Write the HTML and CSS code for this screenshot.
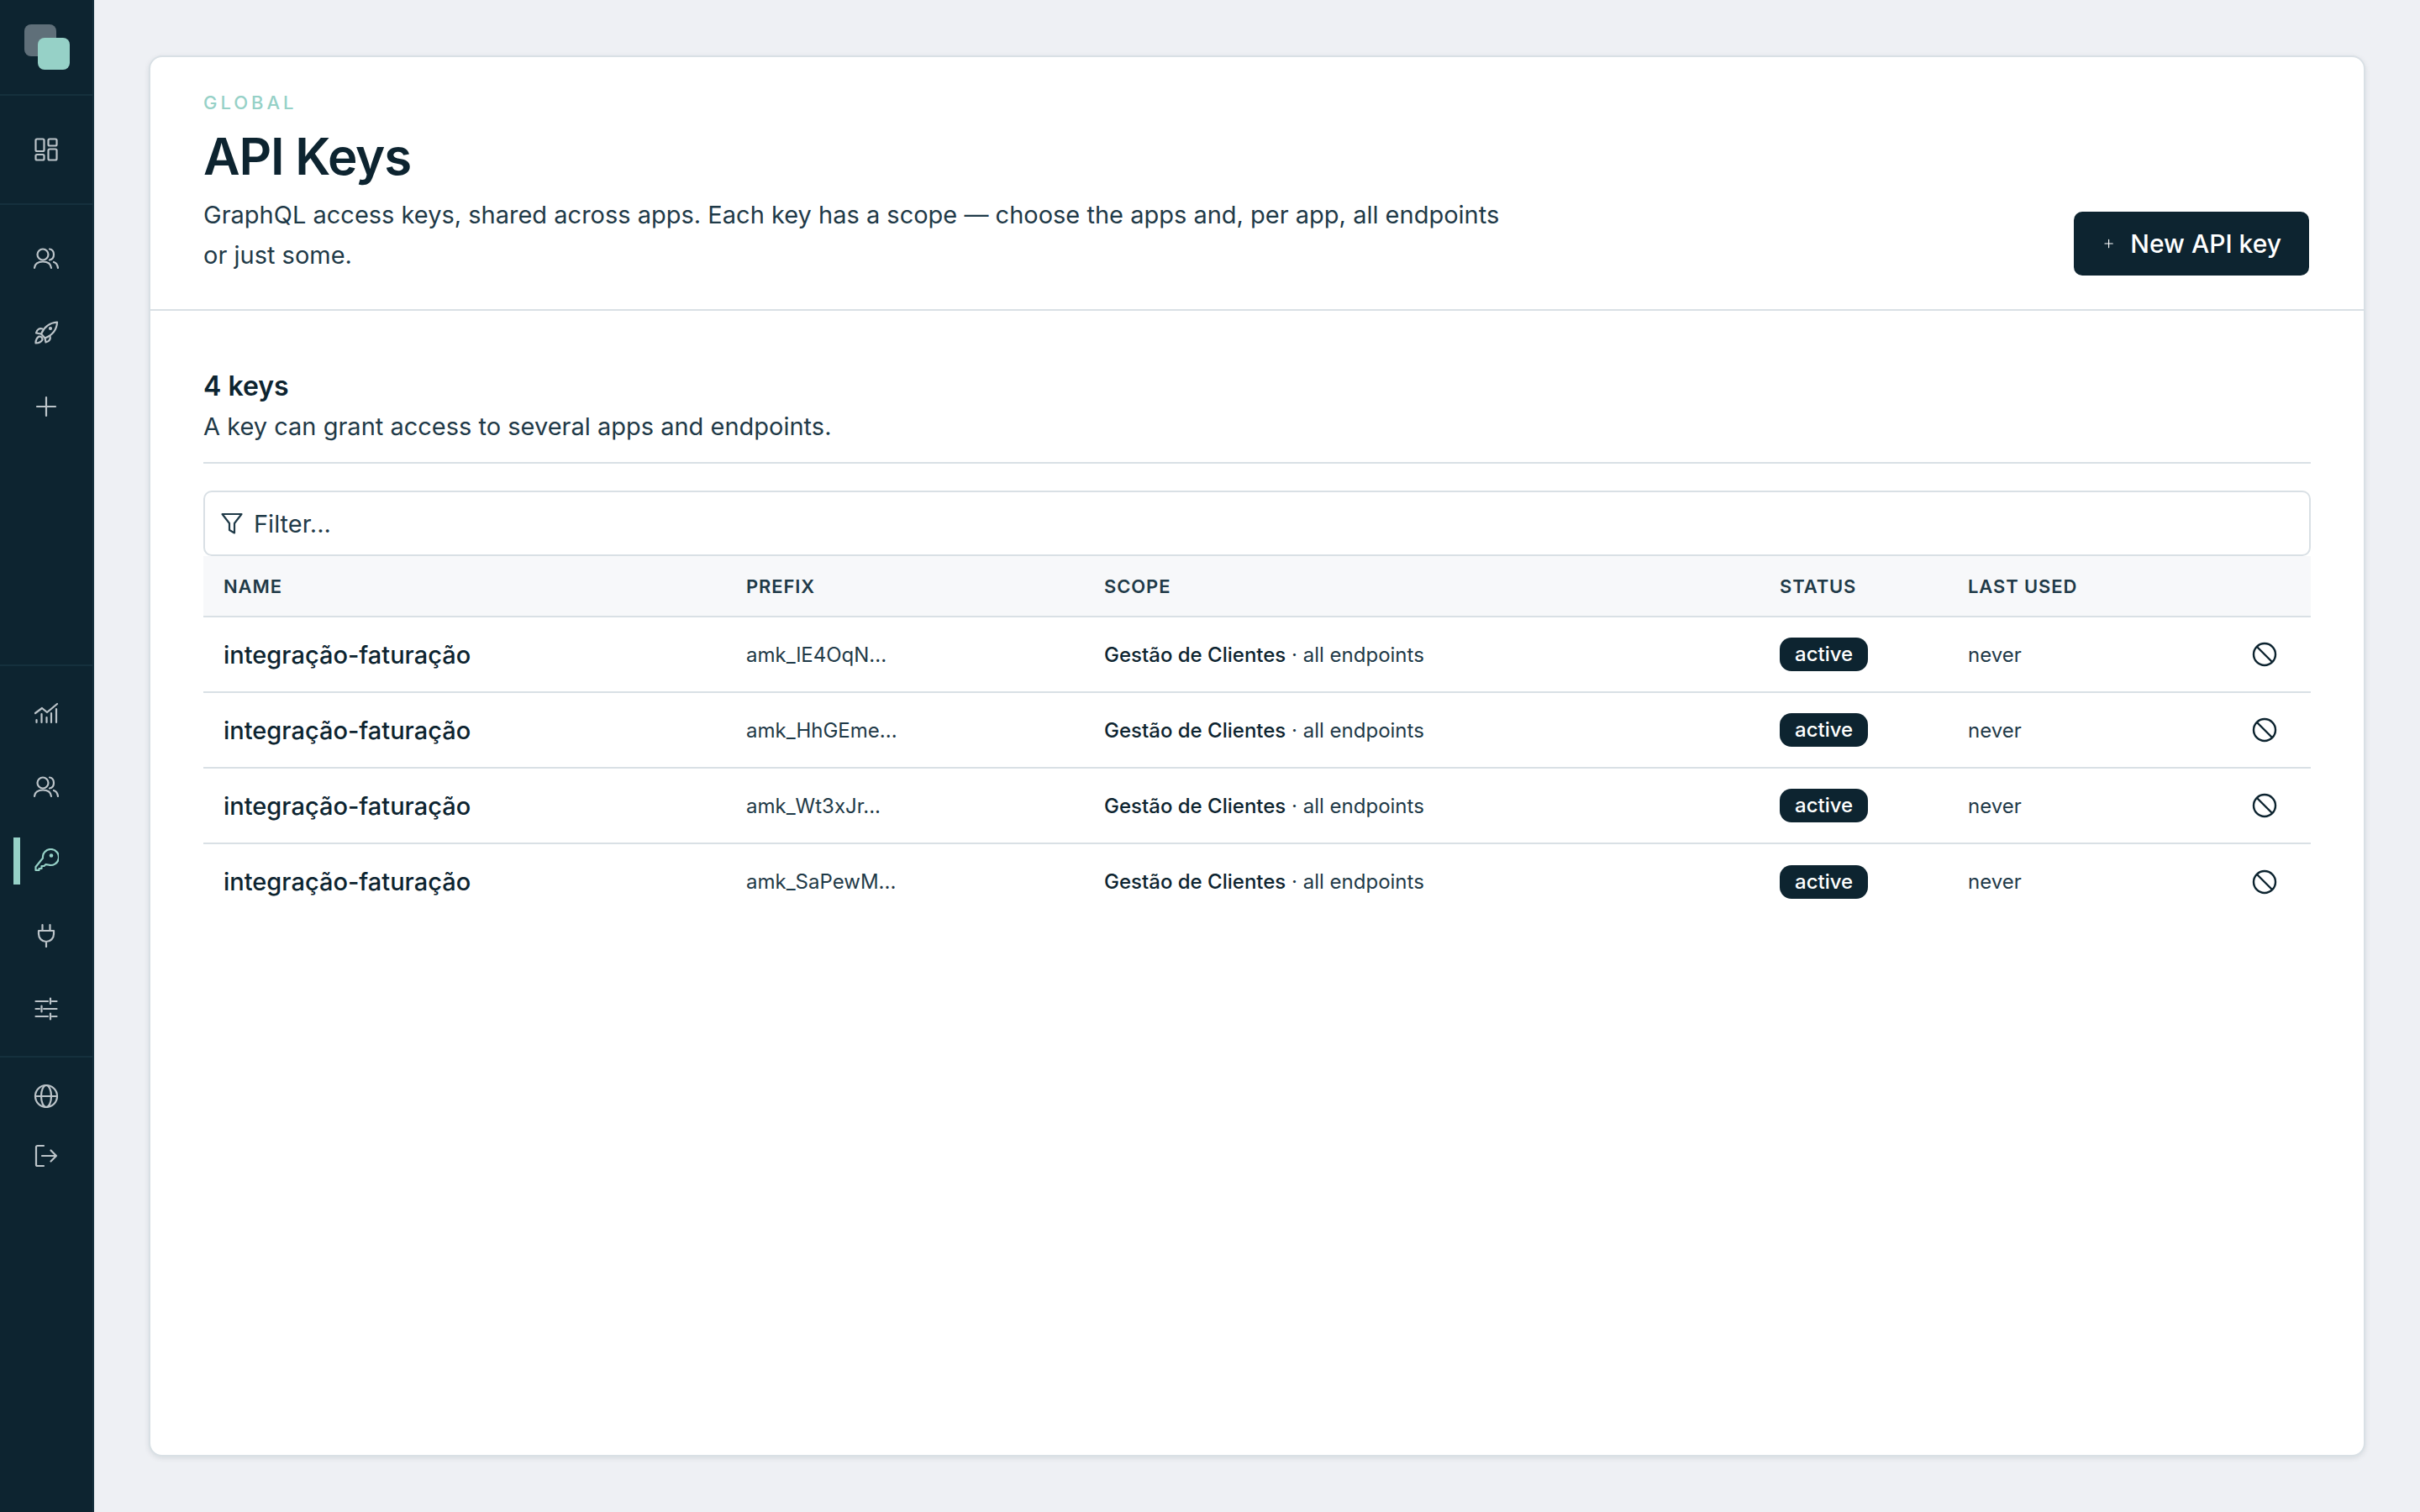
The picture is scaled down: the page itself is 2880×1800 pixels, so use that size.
FILE: index.html
```html
<!DOCTYPE html>
<html lang="en">
<head>
<meta charset="utf-8">
<title>API Keys</title>
<link rel="stylesheet" href="styles.css">
</head>
<body>
<div class="app">
  <nav class="sidebar">
    <div class="logo"><span class="logo-back"></span><span class="logo-front"></span></div>
    <div class="nav-group nav-home">
      <a class="nav-item"><svg class="ico" viewBox="0 0 30 30"><rect x="2.5" y="2.5" width="10" height="14.5" rx="1.5"/><rect x="17.5" y="2.5" width="10" height="8" rx="1.5"/><rect x="2.5" y="21" width="10" height="6.5" rx="1.5"/><rect x="17.5" y="14.5" width="10" height="13" rx="1.5"/></svg></a>
    </div>
    <div class="nav-group nav-app">
      <a class="nav-item"><svg class="ico" viewBox="0 0 30 30"><use href="#users"/></svg></a>
      <a class="nav-item"><svg class="ico" viewBox="0 0 30 30"><path d="M9 16.5C12 9 18 3.5 28 2.5 27.5 12.500 21 18.500 13.500 21.500Z"/><path d="M10.500 10.500C7 9.500 4 11 3 15.500L9 16.500"/><path d="M19.500 19C20.500 22.500 19 25.500 14.500 26.500L13.500 21.500"/><path d="M6.500 19.500C4 21 2.500 24 2.500 27.500 6 27.500 9 26 10.500 23.500 10.500 21 9 19.500 6.500 19.500Z"/><circle cx="20" cy="10" r="1" /></svg></a>
      <a class="nav-item"><svg class="ico" viewBox="0 0 30 30"><path d="M15 4V26M4 15H26"/></svg></a>
    </div>
    <div class="nav-group nav-global">
      <a class="nav-item"><svg class="ico" viewBox="0 0 30 30"><path d="M2 15L10 9L16 14L28 4"/><path d="M3.500 26V23M9.500 26V16M15.500 26V20M21 26V15M27 26V10"/></svg></a>
      <a class="nav-item"><svg class="ico" viewBox="0 0 30 30"><use href="#users"/></svg></a>
      <a class="nav-item active"><span class="active-bar"></span><svg class="ico" viewBox="0 0 30 30"><path d="M11 12.500A9.500 9.500 0 1 1 17.500 20.500C16.500 20.500 15.500 20.300 14.500 20L12.500 22H9.500V25H6.500V27H2.500V23Z" transform="translate(0 -1)"/><circle cx="21" cy="8.500" r="1.200"/></svg></a>
      <a class="nav-item"><svg class="ico" viewBox="0 0 30 30"><path d="M10.500 3V10M19.500 3V10M6 10H24V14A9 9 0 0 1 6 14ZM15 23V29"/></svg></a>
      <a class="nav-item"><svg class="ico" viewBox="0 0 30 30"><path d="M2.500 6H17M22 6H27.500M20 2.500V9M2.500 15H7M12 15H27.500M9.500 11.500V18.500M2.500 24H17M22 24H27.500M20 20.500V27.500"/></svg></a>
    </div>
    <div class="nav-foot">
      <a class="nav-item"><svg class="ico" viewBox="0 0 30 30"><circle cx="15" cy="15" r="13"/><ellipse cx="15" cy="15" rx="6" ry="13"/><path d="M2 15H28"/></svg></a>
      <a class="nav-item"><svg class="ico" viewBox="0 0 30 30"><path d="M12 3H4.500A1.500 1.500 0 0 0 3 4.500V25.500A1.500 1.500 0 0 0 4.500 27H12M10 15H27M20.500 8.500L27 15L20.500 21.500"/></svg></a>
    </div>
  </nav>

  <main class="main">
    <section class="card">
      <header class="card-head">
        <div class="head-text">
          <div class="eyebrow">GLOBAL</div>
          <h1 class="title">API Keys</h1>
          <p class="lede">GraphQL access keys, shared across apps. Each key has a scope — choose the apps and, per app, all endpoints or just some.</p>
        </div>
        <button class="btn-new"><svg class="btn-ico" viewBox="0 0 24 24"><path d="M12 2V22M2 12H22"/></svg>New API key</button>
      </header>
      <div class="card-body">
        <div class="section-head">
          <h2 class="count">4 keys</h2>
          <p class="sub">A key can grant access to several apps and endpoints.</p>
        </div>
        <div class="filter">
          <svg class="filter-ico" viewBox="0 0 28 28"><path d="M2.500 3H25.500L17 14V25.500L11 22V14Z"/></svg>
          <span class="filter-text">Filter...</span>
        </div>
        <table class="keys">
          <colgroup><col class="c-name"><col class="c-prefix"><col class="c-scope"><col class="c-status"><col class="c-used"><col class="c-act"></colgroup>
          <thead><tr><th>Name</th><th>Prefix</th><th>Scope</th><th>Status</th><th>Last used</th><th></th></tr></thead>
          <tbody>
            <tr><td class="name">integração-faturação</td><td>amk_lE4OqN...</td><td class="scope"><b>Gestão de Clientes</b> · all endpoints</td><td><span class="badge">active</span></td><td>never</td><td class="act"><svg class="ban" viewBox="0 0 30 30"><use href="#ban"/></svg></td></tr>
            <tr><td class="name">integração-faturação</td><td>amk_HhGEme...</td><td class="scope"><b>Gestão de Clientes</b> · all endpoints</td><td><span class="badge">active</span></td><td>never</td><td class="act"><svg class="ban" viewBox="0 0 30 30"><use href="#ban"/></svg></td></tr>
            <tr><td class="name">integração-faturação</td><td>amk_Wt3xJr...</td><td class="scope"><b>Gestão de Clientes</b> · all endpoints</td><td><span class="badge">active</span></td><td>never</td><td class="act"><svg class="ban" viewBox="0 0 30 30"><use href="#ban"/></svg></td></tr>
            <tr><td class="name">integração-faturação</td><td>amk_SaPewM...</td><td class="scope"><b>Gestão de Clientes</b> · all endpoints</td><td><span class="badge">active</span></td><td>never</td><td class="act"><svg class="ban" viewBox="0 0 30 30"><use href="#ban"/></svg></td></tr>
          </tbody>
        </table>
      </div>
    </section>
  </main>
</div>
<svg class="defs" width="0" height="0">
  <symbol id="users" viewBox="0 0 30 30"><circle cx="11" cy="10" r="6.500"/><path d="M1 26C1.500 21 5 18.500 11 18.500S20.500 21 21 26"/><path d="M19 3.500C22 4 24 6.500 24 10S22 16 19 16.500"/><path d="M24 19C27 20 28.500 22.500 29 26"/></symbol>
  <symbol id="ban" viewBox="0 0 30 30"><circle cx="15" cy="15" r="13"/><path d="M6 6L24 24"/></symbol>
</svg>
</body>
</html>
```
FILE: styles.css
```css
* { box-sizing: border-box; }
html, body { margin: 0; height: 100%; }
body { font-family: Inter, "Liberation Sans", sans-serif; color: #0d2430; background: #eef0f4; }
.app { display: flex; height: 1800px; }
.defs { display: none; }

.sidebar { width: 112px; flex: none; display: flex; flex-direction: column; background: #0d2430; border-right: 2px solid #15303d; }
.logo { height: 114px; flex: none; border-bottom: 2px solid #15303d; position: relative; }
.logo-back, .logo-front { position: absolute; width: 38px; height: 38px; border-radius: 8px; }
.logo-back { left: 29px; top: 29px; background: #5f6f79; }
.logo-front { left: 45px; top: 45px; background: #96d1c7; }
.nav-group { display: flex; flex-direction: column; border-bottom: 2px solid #15303d; }
.nav-home { padding: 20px 0; height: 130px; }
.nav-app { flex: 1; padding-top: 20px; }
.nav-global { padding: 12px 0; }
.nav-foot { flex: 1; display: flex; flex-direction: column; padding-top: 14px; gap: 7px; }
.nav-foot .nav-item { height: 64px; }
.nav-item { position: relative; display: flex; align-items: center; justify-content: center; height: 88px; color: #bcc4c9; }
.nav-item.active { color: #96d1c7; }
.active-bar { position: absolute; left: 16px; top: 16px; width: 8px; height: 56px; background: #96d1c7; }
.ico { width: 30px; height: 30px; fill: none; stroke: currentColor; stroke-width: 2.2; stroke-linecap: round; stroke-linejoin: round; }

.main { flex: 1; padding: 66px 65px; min-width: 0; }
.card { height: 100%; background: #fff; border: 2px solid #d9e0e5; border-radius: 16px; box-shadow: 0 2px 6px rgba(13,36,48,.1); }
.card-head { display: flex; justify-content: space-between; align-items: flex-end; padding: 40px 64px 40px 63px; border-bottom: 2px solid #d9e0e5; }
.eyebrow { font-size: 22px; line-height: 28px; font-weight: 500; letter-spacing: .18em; color: #96d1c7; }
.title { margin: 14px 0 0; font-size: 60px; line-height: 72px; font-weight: 600; letter-spacing: -.02em; color: #0d2430; }
.lede { margin: 10px 0 0; width: 1560px; font-size: 29px; line-height: 48px; color: #1f3a48; }
.btn-new { display: flex; align-items: center; gap: 20px; width: 280px; height: 76px; padding: 0 33px 0 36px; margin-right: 1px; border: 0; border-radius: 10px; background: #0d2430; color: #fff; font: 500 30px Inter, sans-serif; white-space: nowrap; }
.btn-ico { width: 24px; height: 24px; fill: none; stroke: currentColor; stroke-width: 2.4; stroke-linecap: round; }

.card-body { padding: 68px 63px 0; }
.section-head { padding-bottom: 20px; border-bottom: 2px solid #d9e0e5; }
.count { margin: 0; font-size: 32px; line-height: 44px; font-weight: 600; color: #0d2430; }
.sub { margin: 4px 0 0; font-size: 29px; line-height: 44px; color: #1f3a48; }
.filter { display: flex; align-items: center; gap: 12px; height: 78px; margin-top: 32px; padding: 0 18px; border: 2px solid #d9e0e5; border-radius: 10px; }
.filter-ico { width: 28px; height: 28px; fill: none; stroke: #1f3a48; stroke-width: 2.2; stroke-linejoin: round; }
.filter-text { font-size: 29px; color: #1f3a48; }

.keys { width: 100%; border-collapse: collapse; table-layout: fixed; }
.c-name { width: 622px; } .c-prefix { width: 426px; } .c-scope { width: 804px; } .c-status { width: 224px; }
.c-act { width: 108px; }
.keys th { height: 72px; padding: 0 24px; background: #f7f8fa; border-bottom: 2px solid #d9e0e5; text-align: left; font-size: 22px; font-weight: 600; letter-spacing: .04em; text-transform: uppercase; color: #1f3a48; }
.keys td { height: 90px; padding: 0 24px; border-bottom: 2px solid #d9e0e5; font-size: 24px; color: #1f3a48; white-space: nowrap; }
.keys tbody tr:last-child td { border-bottom: 0; }
.keys td.name { font-size: 29px; font-weight: 500; color: #0d2430; }
.scope b { font-weight: 500; color: #0d2430; }
.badge { display: inline-block; height: 40px; line-height: 40px; padding: 0 18px; border-radius: 14px; background: #0d2430; color: #fff; font-size: 24px; font-weight: 500; }
.keys td.act { padding: 0; text-align: center; }
.ban { display: block; width: 30px; height: 30px; margin: 0 auto; transform: translateX(-1px); fill: none; stroke: #0d2430; stroke-width: 2.4; stroke-linecap: round; }
```
